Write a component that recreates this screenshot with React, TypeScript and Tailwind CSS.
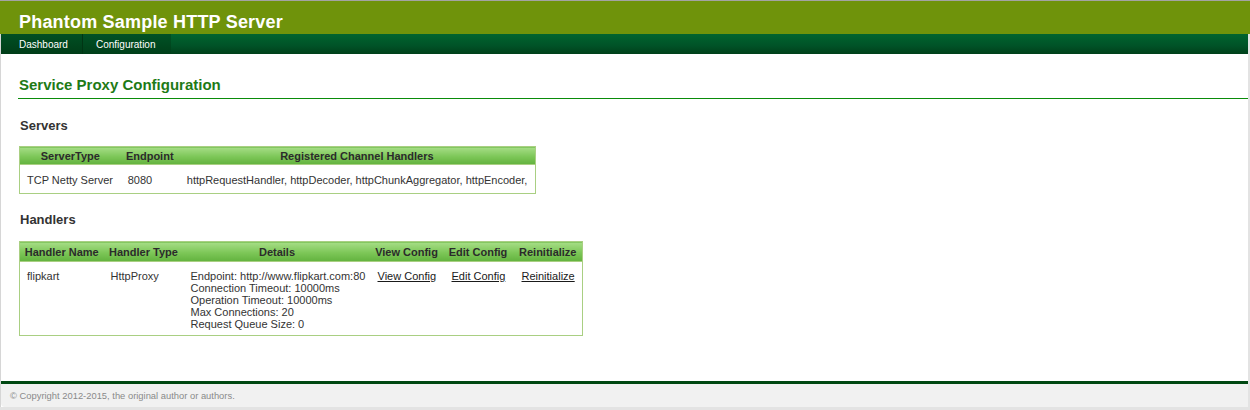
const SANS = "font-['Liberation_Sans',Arial,Helvetica,sans-serif]"

const thCls = 'h-[18px] p-0 text-center text-[11px] font-bold text-[#2b2b2b] leading-[12px] bg-[linear-gradient(#a6dd86,#7cc657_55%,#62b23e)] border-b border-[#a9cf82]'
const tdCls = 'align-top text-[11px] text-[#333] leading-[12px] pl-[7px]'

function Servers() {
  return (
    <table className="border border-[#a9cf82] border-collapse table-fixed w-[517px]">
      <colgroup>
        <col className="w-[101px]" />
        <col className="w-[58px]" />
        <col className="w-[356px]" />
      </colgroup>
      <thead>
        <tr>
          <th className={thCls}>ServerType</th>
          <th className={thCls}>Endpoint</th>
          <th className={thCls}>Registered Channel Handlers</th>
        </tr>
      </thead>
      <tbody>
        <tr>
          <td className={`${tdCls} pt-[9px] pb-[7px]`}>TCP Netty Server</td>
          <td className={`${tdCls} pt-[9px] pb-[7px]`}>8080</td>
          <td className={`${tdCls} pt-[9px] pb-[7px] !pl-[8px] whitespace-nowrap`}>
            httpRequestHandler, httpDecoder, httpChunkAggregator, httpEncoder,
          </td>
        </tr>
      </tbody>
    </table>
  )
}

function Handlers() {
  const link = 'underline text-[#1a1a1a]'
  return (
    <table className="border border-[#a9cf82] border-collapse table-fixed w-[564px]">
      <colgroup>
        <col className="w-[84px]" />
        <col className="w-[80px]" />
        <col className="w-[187px]" />
        <col className="w-[72px]" />
        <col className="w-[71px]" />
        <col className="w-[69px]" />
      </colgroup>
      <thead>
        <tr>
          <th className={`${thCls} !h-[20px]`}>Handler Name</th>
          <th className={`${thCls} !h-[20px]`}>Handler Type</th>
          <th className={`${thCls} !h-[20px]`}>Details</th>
          <th className={`${thCls} !h-[20px]`}>View Config</th>
          <th className={`${thCls} !h-[20px]`}>Edit Config</th>
          <th className={`${thCls} !h-[20px]`}>Reinitialize</th>
        </tr>
      </thead>
      <tbody>
        <tr>
          <td className={`${tdCls} pt-[8px] pb-[5px]`}>flipkart</td>
          <td className={`${tdCls} pt-[8px] pb-[5px]`}>HttpProxy</td>
          <td className={`${tdCls} pt-[8px] pb-[5px] whitespace-nowrap`}>
            Endpoint: http://www.flipkart.com:80<br />
            Connection Timeout: 10000ms<br />
            Operation Timeout: 10000ms<br />
            Max Connections: 20<br />
            Request Queue Size: 0
          </td>
          <td className={`${tdCls} pt-[8px] pb-[5px]`}><a className={link}>View Config</a></td>
          <td className={`${tdCls} pt-[8px] pb-[5px] !pl-[9px]`}><a className={link}>Edit Config</a></td>
          <td className={`${tdCls} pt-[8px] pb-[5px] !pl-[8px]`}><a className={link}>Reinitialize</a></td>
        </tr>
      </tbody>
    </table>
  )
}

export default function App() {
  return (
    <div className={`${SANS} w-[1250px] h-[410px] bg-[#e3e3e3] border-t border-[#a3a3a3] overflow-hidden`}>
      <div className="h-[33px] bg-[#6f930b] pl-[19px] pt-[12px]">
        <h1 className="text-[18px] leading-[18px] font-bold text-white tracking-[0.2px]">Phantom Sample HTTP Server</h1>
      </div>
      <div className="w-[1248px] border-l border-[#d6d6d6] bg-white">
        <div className="h-[20px] flex bg-[linear-gradient(#00642f,#005227_60%,#00401a)]">
          <div className="w-[82px] pl-[18px] pt-px text-[10px] leading-[20px] text-white bg-[linear-gradient(#004f23,#003d18)] border-r border-[#003514]">
            Dashboard
          </div>
          <div className="w-[88px] pl-[13px] pt-px text-[10px] leading-[20px] text-white bg-[linear-gradient(#005226,#003f19)]">
            Configuration
          </div>
        </div>
        <div className="h-[327px] pl-[17px] pt-[22px]">
          <h2 className="pl-px pb-[4px] text-[15px] leading-[18px] font-bold text-[#1e7a16] border-b border-b-[#0a8c0a]">
            Service Proxy Configuration
          </h2>
          <h3 className="mt-[19px] pl-[2px] text-[13px] leading-[16px] font-bold text-[#333]">Servers</h3>
          <div className="mt-[12px] pl-px">
            <Servers />
          </div>
          <h3 className="mt-[18px] pl-[2px] text-[13px] leading-[16px] font-bold text-[#333]">Handlers</h3>
          <div className="mt-[13px] pl-px">
            <Handlers />
          </div>
        </div>
        <div className="border-t-[3px] border-[#004812] bg-[#f1f1f1] h-[26px] rounded-bl-[4px] pl-[9px] text-[9.4px] leading-[23px] text-[#8a8a8a]">
          © Copyright 2012-2015, the original author or authors.
        </div>
      </div>
    </div>
  )
}
